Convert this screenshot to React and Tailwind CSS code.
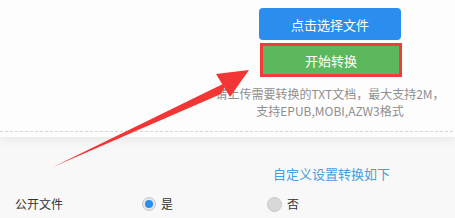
import React from "react";

export default function App() {
  const font = { fontFamily: '"Noto Sans CJK SC", "Noto Sans", sans-serif' };
  return (
    <div
      className="relative w-[455px] h-[218px] overflow-hidden bg-[#f8f8f8]"
      style={font}
    >
      <div className="relative h-[137px] bg-[#fdfdfd] shadow-[0_3px_10px_rgba(0,0,0,0.07)]">
        <div className="flex flex-col items-center w-[142px] ml-[259px] pt-[8px]">
          <div className="w-[142px] h-[32px] rounded-[4px] bg-[#2b8ded] flex items-center justify-center text-white text-[13px] leading-none">
            点击选择文件
          </div>
          <div className="mt-[3px] ml-[2px] w-[142px] h-[34px] border-[3px] border-[#f43b3b] bg-[#5cb85c] flex items-center justify-center text-white text-[13px] leading-none">
            开始转换
          </div>
          <div className="mt-[8px] flex flex-col items-center text-[12px] leading-[17px] text-[#8f8f8f] whitespace-nowrap">
            <div>请上传需要转换的TXT文档，最大支持2M，</div>
            <div>支持EPUB,MOBI,AZW3格式</div>
          </div>
        </div>
        <div className="absolute left-0 right-[2px] top-[131px] border-t border-dashed border-[#d6d6d6]" />
      </div>
      <div className="pt-[28px]">
        <div className="ml-[273px] text-[13px] leading-[17px] text-[#45a0e0]">
          自定义设置转换如下
        </div>
        <div className="mt-[12px] flex items-center h-[20px]">
          <div className="ml-[15px] w-[127px] text-[12px] text-[#333]">公开文件</div>
          <div className="flex items-center w-[125px]">
            <span className="w-[14px] h-[14px] rounded-full border border-[#c8c8c8] bg-[#e6e6e6] flex items-center justify-center">
              <span className="w-[8px] h-[8px] rounded-full bg-[#2b8ded]" />
            </span>
            <span className="ml-[5px] text-[12px] text-[#333]">是</span>
          </div>
          <div className="flex items-center">
            <span className="w-[15px] h-[15px] rounded-full border border-[#c8c8c8] bg-[#d8d8d8]" />
            <span className="ml-[5px] text-[12px] text-[#333]">否</span>
          </div>
        </div>
      </div>
      <svg
        className="absolute left-0 top-0 pointer-events-none"
        width="455"
        height="218"
        viewBox="0 0 455 218"
      >
        <polygon points="53,167 227,82 221,94" fill="#f23535" />
        <polygon points="249,70 216,74 230,97" fill="#f23535" />
      </svg>
    </div>
  );
}
